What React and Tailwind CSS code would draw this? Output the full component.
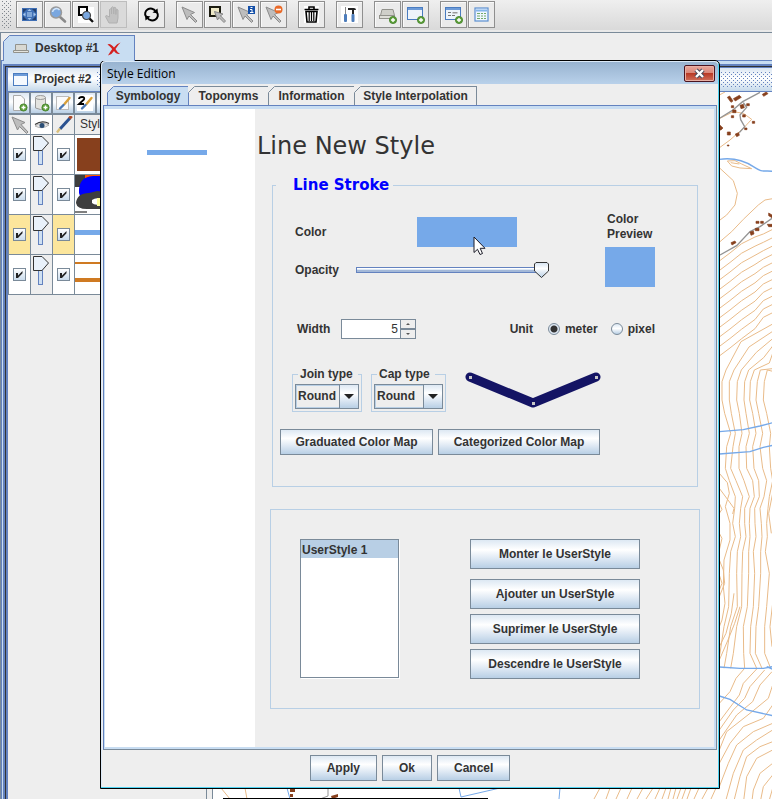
import React, { useId, useState } from "react";

const steel =
  "border border-[#7a8a99] bg-[linear-gradient(180deg,#dde8f3_0%,#ffffff_35%,#dfe9f4_65%,#b8cfe5_100%)]";

/* ---------- toolbar icons ---------- */

const Plus = ({ x = 15, y = 15 }) => (
  <g>
    <circle cx={x} cy={y} r="3.6" fill="#5fa03c" stroke="#3f7f24" strokeWidth="0.8" />
    <path d={`M${x - 2} ${y}h4M${x} ${y - 2}v4`} stroke="#fff" strokeWidth="1.4" />
  </g>
);

const Arrow = () => (
  <path d="M2 2L14.500 7.500L10.500 9.500L17 16L15.500 17.500L9 11L7 14.500Z" fill="#bdbdbd" stroke="#8c8c8c" />
);

const icons = {
  extent: (
    <g>
      <rect x="2" y="3" width="15" height="13" fill="#3f6fb5" />
      <path d="M3 4h4L3 8zM16 4h-4l4 4zM3 15h4l-4-4zM16 15h-4l4-4z" fill="#23406e" />
      <rect x="7" y="7" width="5" height="5" fill="#7fa6d8" />
      <path d="M9.500 4l2 2h-4zM9.500 15l2-2h-4zM3 9.500l2.500-2v4zM16 9.500l-2.500-2v4z" fill="#a9c8ec" />
    </g>
  ),
  zoom: (
    <g>
      <path d="M11.500 11.500L17 16.500" stroke="#8a8a8a" strokeWidth="2.600" strokeLinecap="round" />
      <circle cx="8" cy="7.500" r="5.500" fill="#7aa7df" stroke="#9a9a9a" strokeWidth="1.500" />
      <path d="M4.500 7a4 4 0 0 1 7-2" stroke="#d5e6f8" strokeWidth="1.600" fill="none" />
    </g>
  ),
  zoomBox: (
    <g>
      <rect x="2" y="2" width="16" height="16" fill="#fff" />
      <rect x="3" y="2" width="8" height="8" fill="none" stroke="#000" strokeWidth="2" />
      <path d="M13 13L17 17" stroke="#111" strokeWidth="2.400" />
      <circle cx="10.500" cy="10.500" r="4" fill="#7aa7df" stroke="#444" strokeWidth="1.200" />
    </g>
  ),
  hand: (
    <path
      d="M5 18L1.500 11.500q0-1.500 2-.5L5.500 12V4.500q1-1.500 2 0V9V2.500q1.200-1.500 2.200 0V9V3q1.200-1.500 2.200 0V9.500V5q1.200-1.200 2.100 0V13L13 18z"
      fill="#c2c2c2"
      stroke="#b0b0b0"
    />
  ),
  refresh: (
    <g>
      <path d="M4 11.500a5.500 5 0 0 1 9.500-5.500M15 7.500a5.500 5 0 0 1-9.500 5.500" fill="none" stroke="#000" strokeWidth="2" />
      <path d="M10.500 7.500L16 8.500L15.500 3.500ZM8.500 11.500L3 10.500L3.500 15.500Z" fill="#000" />
    </g>
  ),
  select: <Arrow />,
  selectBox: (
    <g>
      <rect x="2" y="2" width="10" height="9" fill="#eee9c8" stroke="#1c1c10" strokeWidth="2" />
      <path d="M6.500 6.500L15 9l-2.500 1.800L17.500 16l-1.500 1.500-5-5-1.500 2.500z" fill="#bdbdbd" stroke="#888" />
    </g>
  ),
  info: (
    <g>
      <Arrow />
      <rect x="12" y="1" width="7" height="8" fill="#1550a8" />
      <path d="M14.500 2.500h2M14 4.500h2v3M14 7.500h3.500" stroke="#fff" fill="none" />
    </g>
  ),
  clear: (
    <g>
      <Arrow />
      <circle cx="14.500" cy="4.500" r="4" fill="#ea6a28" />
      <path d="M12 4.500h5" stroke="#fff" strokeWidth="1.600" />
    </g>
  ),
  trash: (
    <g>
      <rect x="2" y="1" width="15" height="17" fill="#fff" />
      <path d="M2.500 4.500h14M7 4V2h5v2M4 6.500l1 10.500h9l1-10.500z" fill="none" stroke="#000" strokeWidth="1.600" />
      <path d="M7.200 7v9M9.500 7v9M11.800 7v9" stroke="#000" strokeWidth="1.200" />
    </g>
  ),
  tools: (
    <g>
      <rect x="1" y="1" width="17" height="17" fill="#fff" />
      <path d="M8 3h6q2 0 2 2h-2v4h-2V5H8z" fill="#222" />
      <path d="M5.500 2v8" stroke="#888" />
      <rect x="4" y="9" width="3" height="8" rx="1" fill="#4d7cba" />
      <rect x="11.500" y="9" width="3" height="8" rx="1" fill="#4d7cba" />
    </g>
  ),
  addDesk: (
    <g>
      <path d="M4 4.500h11l1.500 6h-14z" fill="#cfcfc9" stroke="#92928c" />
      <rect x="1.500" y="10.500" width="15" height="3" fill="#deded8" stroke="#92928c" />
      <Plus />
    </g>
  ),
  addWin: (
    <g>
      <rect x="1.500" y="2.500" width="15" height="12" fill="#eef4fb" stroke="#4a7cc0" />
      <rect x="2" y="3" width="14" height="2" fill="#6d9bd8" />
      <Plus />
    </g>
  ),
  addForm: (
    <g>
      <rect x="1.500" y="2.500" width="15" height="12" fill="#eef4fb" stroke="#4a7cc0" />
      <rect x="2" y="3" width="14" height="2" fill="#6d9bd8" />
      <path d="M4 7.500h3M4 10.500h3M8 10.500h3" stroke="#777" />
      <rect x="8.500" y="7" width="5" height="1.500" fill="#999" />
      <Plus />
    </g>
  ),
  table: (
    <g>
      <rect x="3" y="3" width="13" height="13" fill="#eff6ff" stroke="#5b8fd0" strokeWidth="1.200" />
      <path d="M4 5.500h11" stroke="#85b6ea" strokeWidth="2" />
      <path d="M5 8.500h3M9 8.500h2M12 8.500h2M5 11h3M9 11h2M12 11h2M5 13.500h3M9 13.500h2M12 13.500h2" stroke="#72aa6a" />
    </g>
  ),
};

const groups = [
  [["extent", "Full extent"], ["zoom", "Zoom"], ["zoomBox", "Zoom to box"], ["hand", "Pan", true]],
  [["refresh", "Refresh"]],
  [["select", "Select"], ["selectBox", "Select by box"], ["info", "Feature information"], ["clear", "Clear selection"]],
  [["trash", "Delete"]],
  [["tools", "Tools"]],
  [["addDesk", "New desktop"], ["addWin", "New project"]],
  [["addForm", "Add form"], ["table", "Attribute table"]],
];

/* Staggered one-pixel dots: drag handles and title bars. */
function Dots({ color, className }) {
  const id = useId();
  return (
    <svg className={className} aria-hidden="true">
      <pattern id={id} width="4" height="4" patternUnits="userSpaceOnUse">
        <rect x="0" y="0" width="1" height="1" fill={color} />
        <rect x="2" y="2" width="1" height="1" fill={color} />
      </pattern>
      <rect width="100%" height="100%" fill={`url(#${id})`} />
    </svg>
  );
}

function Toolbar() {
  return (
    <header className="flex h-[33px] shrink-0 items-start gap-[11px] border-b border-[#7a8a99] bg-[linear-gradient(180deg,#efefef,#d8d8d8)] pt-px pl-[2px] shadow-[inset_0_-2px_0_#e9e9e9]">
      {groups.map((g, i) => (
        <div key={i} className="flex gap-px">
          {i === 0 && <Dots color="#7f858c" className="mr-[3px] h-[27px] w-[10px]" />}
          {g.map(([name, label, off]) => (
            <button
              key={name}
              aria-label={label}
              disabled={off}
              className="flex size-[27px] items-center justify-center border border-[#8f8f8f] bg-[#ebebeb] shadow-[inset_1px_1px_0_#fafafa] disabled:border-[#bdbdbd] disabled:bg-[#dadada] disabled:shadow-none"
            >
              <svg width="19" height="19" viewBox="0 0 19 19">
                {icons[name]}
              </svg>
            </button>
          ))}
        </div>
      ))}
    </header>
  );
}

/* ---------- shared widgets ---------- */

function Tab({ selected, children, className = "", fill = "#eeeeee" }) {
  const line = selected ? "#6382bf" : "#7a8a99";
  return (
    <button
      role="tab"
      aria-selected={!!selected}
      className={
        "relative border-t border-r " +
        (selected ? "border-[#6382bf] bg-[#c8ddf2] border-l " : "border-[#7a8a99] bg-[#eeeeee] ") +
        className
      }
    >
      <svg className="absolute -top-px -left-px" width="7" height="7" viewBox="0 0 7 7">
        <path d="M0 0H7L0 7Z" fill={fill} />
        <path d="M0.500 6.500L6.500 0.500" stroke={line} />
      </svg>
      {children}
    </button>
  );
}

function Check({ label }) {
  return (
    <span className="relative mx-auto block size-[13px]">
      <input
        type="checkbox"
        defaultChecked
        aria-label={label}
        className="peer block size-[13px] appearance-none border border-[#7a8a99] bg-[linear-gradient(180deg,#ffffff,#c9dbec)]"
      />
      <svg className="pointer-events-none absolute inset-0 hidden peer-checked:block" width="13" height="13">
        <path d="M3 5H5V7.500L9.500 3V5.200L5 10H3Z" fill="#222" />
      </svg>
    </span>
  );
}

function Btn({ children, className = "" }) {
  return <button className={steel + " flex items-center justify-center font-bold whitespace-nowrap " + className}>{children}</button>;
}

function Combo({ id, label, width }) {
  return (
    <fieldset className={"border border-[#b8cfe5] px-[2px] pt-[3px] pb-[2px] " + width}>
      <legend className="ml-[3px] pr-[5px] pl-[2px] leading-[14px] whitespace-nowrap">
        <label htmlFor={id}>{label}</label>
      </legend>
      <div className="relative h-[25px]">
        <select
          id={id}
          className="h-[25px] w-full appearance-none border border-[#7a8a99] bg-[#eeeeee] pl-[2px] font-bold shadow-[inset_1px_1px_0_#b8cfe5,inset_-1px_-1px_0_#b8cfe5]"
        >
          <option>Round</option>
          <option>Bevel</option>
          <option>Miter</option>
        </select>
        <span className={steel + " pointer-events-none absolute top-0 right-0 flex h-[25px] w-[20px] items-center justify-center"}>
          <svg width="10" height="5">
            <path d="M0 0H10L5 5Z" fill="#222" />
          </svg>
        </span>
      </div>
    </fieldset>
  );
}

/* ---------- project panel ---------- */

const thumbs = [
  <rect x="2" y="3" width="40" height="33" fill="#87401d" />,
  <g>
    <rect x="0" y="0" width="42" height="12" fill="#3e3e3e" />
    <rect x="10" y="0" width="20" height="3" fill="#ff5500" />
    <path d="M4 18Q3 2 18 1H42V24H6Z" fill="#0000fe" />
    <path d="M1 28Q2 18 14 18L22 16 42 18V34H12Q2 34 1 28Z" fill="#3e3e3e" />
    <path d="M17 25q4-3 9-1v5q-6 2-9-1z" fill="#fff" />
    <rect x="22" y="23" width="10" height="8" fill="#ffff9c" />
    <rect x="0" y="36" width="12" height="2" fill="#808080" />
  </g>,
  <rect x="0" y="15" width="42" height="5" fill="#76a9e9" />,
  <g fill="#cf7a22">
    <rect x="0" y="7" width="42" height="2" />
    <rect x="0" y="23" width="42" height="4" />
  </g>,
];

function VSlider({ label }) {
  return (
    <span className="relative block h-[39px] bg-[#eeeeee]">
      <svg width="21" height="39" className="block">
        <rect x="7.500" y="11.500" width="4" height="18" fill="#cfe0f2" stroke="#6382bf" />
        <path d="M2.500 1.500H11L17.500 8L11 15.500H2.500Z" fill="#e9f1fa" stroke="#333" />
      </svg>
      <input type="range" aria-label={label} defaultValue="100" className="absolute inset-0 h-[39px] w-[21px] opacity-0 [writing-mode:vertical-lr]" />
    </span>
  );
}

function ProjectPanel() {
  const head = "h-[20px] border-r border-b border-[#7a8a99] p-0 font-normal";
  const cell = "h-[40px] border-r border-b border-[#7a8a99] p-0 ";
  return (
    <section className="w-[198px] shrink-0 bg-[#eeeeee]">
      <div className="flex h-[24px] items-center gap-[6px] border-b border-[#6382bf] bg-[linear-gradient(180deg,#dbe6f2,#ffffff_45%,#c4d8ea)] pl-[5px] font-bold">
        <svg width="15" height="13">
          <rect x="0.500" y="0.500" width="14" height="12" fill="#f5f9fe" stroke="#4a7cc0" />
          <rect x="1" y="1" width="13" height="2" fill="#6d9bd8" />
        </svg>
        <span>Project #2</span>
        <Dots color="#6382bf" className="h-[16px] flex-1" />
      </div>
      <div className="flex h-[23px] border-b border-[#7a8a99]">
        {["New layer", "New database layer", "Edit style", "Edit style 2", "More"].map((l, i) => (
          <button key={l} aria-label={l} className="flex h-[22px] w-[22px] items-center justify-center border border-[#7a8a99] bg-[linear-gradient(180deg,#dde8f3,#ffffff_45%,#b8cfe5)]">
            <svg width="18" height="18">
              {i === 0 && <path d="M3.500 1.500H11L14.500 5V16.500H3.500Z" fill="#fbfbfb" stroke="#aaa" />}
              {i === 1 && (
                <g fill="#e4e4e0" stroke="#999">
                  <path d="M3.500 3.500V14q5 3 10 0V3.500" />
                  <ellipse cx="8.500" cy="3.500" rx="5" ry="2" />
                </g>
              )}
              {i < 2 && <Plus x={13.5} y={13.500} />}
              {i === 2 && <rect x="2.500" y="2.500" width="12" height="13" fill="#fbfbfb" stroke="#bbb" />}
              {i === 3 && <rect x="1" y="1" width="16" height="16" fill="#fff" />}
              {i === 3 && <path d="M3 5Q3 3 6 3T8 5.500L3 10H8" fill="none" stroke="#000" strokeWidth="1.800" />}
              {(i === 2 || i === 3) && (
                <g fill="none" strokeLinecap="round">
                  <path d="M15.500 4L10.500 10" stroke="#d9a03a" strokeWidth="2.400" />
                  <path d="M9.500 11L6 14.500" stroke="#4a78b4" strokeWidth="2.400" />
                </g>
              )}
            </svg>
          </button>
        ))}
      </div>
      <table className="w-full table-fixed border-separate border-spacing-0 border-l border-[#7a8a99]">
        <thead>
          <tr>
            <th className={head + " w-[22px]"} aria-label="Selectable">
              <svg width="21" height="18" className="block">
                <path d="M3 1L16 6.500L12 8.500L19 16L17.500 17.500L10.500 10.500L8.500 14Z" fill="#bdbdbd" stroke="#8c8c8c" />
              </svg>
            </th>
            <th className={head + " w-[22px] bg-white"} aria-label="Visible">
              <svg width="21" height="18" className="block">
                <path d="M4 10Q11 5 18 9Q11 14 4 10Z" fill="#e6e6e6" stroke="#888" strokeWidth="0.600" />
                <path d="M4 8.500Q11 4 18 7.500" fill="none" stroke="#333" strokeWidth="1.200" />
                <circle cx="11" cy="9.500" r="2.500" fill="#2c4f76" />
              </svg>
            </th>
            <th className={head + " w-[22px]"} aria-label="Editable">
              <svg width="21" height="18" className="block">
                <path d="M17 2L7 13" stroke="#2b5290" strokeWidth="3" />
                <path d="M18.500 0L16.500 2.500" stroke="#b04a28" strokeWidth="3.200" />
                <path d="M7 12.500L4 16.500" stroke="#d9bf7a" strokeWidth="2.400" />
              </svg>
            </th>
            <th className={head + " pl-[5px] text-left"}>Style</th>
          </tr>
        </thead>
        <tbody>
          {thumbs.map((t, i) => (
            <tr key={i}>
              <td className={cell + (i === 2 ? "bg-[#fce69c]" : "bg-white")}>
                <Check label={"Selectable layer " + (i + 1)} />
              </td>
              <td className={cell + "bg-[#eeeeee]"}>
                <VSlider label={"Visibility of layer " + (i + 1)} />
              </td>
              <td className={cell + (i === 2 ? "bg-[#fce69c]" : "bg-white")}>
                <Check label={"Editable layer " + (i + 1)} />
              </td>
              <td className={cell + "bg-white"}>
                <svg width="42" height="39" className="block">
                  {t}
                </svg>
              </td>
            </tr>
          ))}
        </tbody>
      </table>
    </section>
  );
}

/* ---------- map ---------- */

/* Contour lines, in thirds of a pixel. */
const slopes = Array.from({ length: 11 }, (_, i) => {
  const l = 603 + i * 28.5;
  const r = 508 + i * 25;
  return `M58 ${l}L90 ${l - 24}L125 ${l - 52}L165 ${l - 72 - i}L${190} ${r + 14}L218 ${r}`;
});

const rows = [
  [930, [78, 102, 124, 146, 163, 181, 202]],
  [965, [66, 88, 112, 134, 151, 172, 193]],
  [1020, [66, 88, 110, 132, 149, 168, 190]],
  [1060, [74, 94, 118, 138, 158, 176, 200]],
  [1120, [92, 106, 126, 148, 168, 188, 212]],
  [1160, [80, 99, 117, 138, 158, 180, 208]],
  [1225, [76, 92, 117, 140, 162, 188, 212]],
  [1262, [88, 108, 132, 158, 176, 200, 218]],
  [1310, [106, 128, 148, 163, 178, 192, 208]],
  [1345, [104, 122, 134, 150, 164, 180, 204]],
  [1390, [98, 118, 134, 148, 165, 184, 200]],
  [1430, [106, 122, 138, 150, 168, 186, 202]],
  [1475, [92, 112, 128, 146, 160, 182, 196]],
  [1540, [88, 110, 126, 146, 164, 182, 208]],
  [1640, [86, 112, 125, 142, 160, 176, 200]],
  [1700, [72, 92, 110, 130, 152, 168, 194]],
  [1780, [60, 80, 100, 131, 150, 166, 194]],
  [1825, [50, 72, 92, 134, 170, 186, 212]],
];
const streams = rows[0][1].map((x0, k) => {
  const top = `M218 ${792 + k * 22}L${x0 + 45} ${845 + k * 16}`;
  return top + rows.map(([y, xs]) => `L${xs[k]} ${y}`).join("");
});

const wiggles = [
  "M58 1240L82 1268L88 1300L76 1340L90 1390L90 1440L72 1500L70 1580L75 1630L66 1680L58 1700",
  "M58 1285L84 1320L102 1345L98 1362",
  "M58 1330L66 1348L58 1360",
  "M58 1420L66 1435L58 1470M58 1500L70 1530L74 1570L58 1610M58 1545L66 1570L58 1590",
  "M58 1760L78 1720L94 1660L102 1600",
  "M58 1800L84 1740L104 1690L120 1640",
  "M218 1630L210 1700L216 1760M218 1300L206 1360L214 1420",
  "M134 1825L108 1855L90 1895L58 1930",
  "M172 1825L130 1870L118 1905L58 1985",
  "M194 1830L150 1880L134 1915L100 1950L58 2010",
  "M216 1835L180 1875L158 1925L110 1965L58 2040",
  "M218 1875L205 1915L150 1960L80 2015L58 2070",
  "M218 1935L190 1975L130 2000L90 2050L58 2110",
  "M218 1990L160 2015L110 2055L85 2110L58 2180",
  "M218 2010L170 2040L130 2070L100 2140L75 2230",
  "M218 2045L180 2060L140 2090L120 2150L100 2230",
  "M218 2070L170 2095L140 2150L130 2230",
  "M218 2110L180 2140L160 2190L155 2230",
  "M218 2145L190 2180L180 2230M218 2185L205 2230",
];

const houses = [
  "M82 112l7-4 10 15-6 4z", "M100 116l18-10 6 6-18 11z", "M187 103l12-7 5 5-13 8z", "M120 136l10-3 3 10-10 3z",
  "M94 137h7v6h-7zM98 150h10v8h-10zM94 167h7v6h-7zM140 131h8v6h-8zM128 164h8v7h-8zM157 184h7v6h-7zM60 196l9 8-6 6h-5z",
  "M82 216h9v9h-9zM106 222l10-4 2 8-8 4zM134 204h7v5h-7zM82 255h5v3h-5z",
  "M93 548l12-5 3 5-12 7zM150 516l10-3 2 9-9 4zM168 484h9v6h-9zM182 484h8v6h-8zM166 505h11v7h-11zM206 459l10 6v8l-10-6zM202 493h14v7h-10z",
];

function MapView() {
  return (
    <section className="flex min-w-0 flex-1 flex-col">
      <div className="h-[24px] border-b border-[#6382bf] bg-[linear-gradient(180deg,#dbe6f2,#ffffff_45%,#c4d8ea)] py-[4px]">
        <Dots color="#6382bf" className="h-[15px] w-full" />
      </div>
      <div className="relative flex-1 overflow-hidden bg-white">
        <svg className="absolute inset-0 h-full w-full" role="img" aria-label="Map">
          <g transform="translate(-213 -92)" fill="none">
            <g transform="translate(700 60) scale(0.33333)" strokeWidth="3" stroke="#e9bb89">
              <path d="M60 262L90 240L130 205L155 178L130 160L100 155L60 175M60 104L75 96" />
              <path d="M82 303L105 302L125 312L155 326L120 324L95 318ZM92 308L118 312" />
              <path d="M60 325L100 362L112 400L105 435L80 465L60 480" />
              <path d="M60 545L95 515L130 478L175 435L195 420L218 416" />
              {slopes.map((d) => <path key={d} d={d} />)}
              {streams.map((d) => <path key={d} d={d} />)}
              {wiggles.map((d) => <path key={d} d={d} />)}
              <g stroke="#949494" strokeWidth="4">
                <path d="M60 174L96 152L128 125L180 97M130 128L140 142L120 165L122 179L134 200L118 218" />
                <path d="M60 585L110 557L150 515L180 500L216 475" />
              </g>
              <g stroke="#76a9e9" strokeWidth="4">
                <path d="M58 298C100 292 130 300 160 320S190 330 218 334" />
                <path d="M58 1115L130 1109L180 1098L218 1088M58 1182L150 1175L190 1162L218 1156" />
                <path d="M58 1821L120 1825L190 1825L218 1820M200 1820L218 1828" />
                <path d="M58 1908L90 1918L140 1950L218 1967" />
              </g>
              <g fill="#87401d" stroke="#87401d" strokeWidth="2">
                {houses.map((d) => <path key={d} d={d} />)}
              </g>
            </g>
            <g stroke="#e9bb89">
              <path d="M221 788L230 799M245 788L247 799M600 788L594 799M610 788L606 799M621 788L616 799M632 788L627 799M643 788L637 799M653 788L646 799" />
              <path d="M660 788L655 799M666 788L662 799M671 788L668 799M676 788L673 799M681 788L677 799M686 788L682 799M691 788L687 799M699 788L694 799M708 788L702 799M716 788L711 799" />
            </g>
            <path d="M287 788L290 799M459 788L461 797L500 788M560 788L559 799" stroke="#76a9e9" />
            <path d="M328 788V796L320 799" stroke="#949494" />
            <path d="M290 789h5v3h-5zM290 794h3v3h-3zM331 796l7-2v3l-6 2z" fill="#87401d" />
            <path d="M223 798.500H488" stroke="#000" />
          </g>
        </svg>
      </div>
    </section>
  );
}

/* ---------- style dialog ---------- */

function StyleDialog() {
  const [width, setWidth] = useState(5);
  return (
    <div
      role="dialog"
      aria-label="Style Edition"
      className="absolute top-[60px] left-[100px] w-[620px] rounded-t-[5px] border border-black bg-[#eeeeee] shadow-[inset_-1px_-1px_0_#4fd3f2,inset_1px_1px_0_#dbe9f7]"
    >
      <div className="m-px mb-0 flex h-[22px] items-center justify-between rounded-t-[4px] bg-[linear-gradient(180deg,#98b3d0,#b9d1ea)] pr-[3px] pl-[5px]">
        <span className="font-['Open_Sans','Noto_Sans',sans-serif] text-[12px] text-black">Style Edition</span>
        <button
          aria-label="Close"
          className="flex h-[17px] w-[31px] items-center justify-center rounded-[2px] border border-[#4a1420] bg-[linear-gradient(180deg,#e8a79c_0%,#d98577_48%,#b93a26_50%,#d0705c_100%)] shadow-[inset_0_0_0_1px_#e8b0a5]"
        >
          <svg width="13" height="11" viewBox="0 0 13 11">
            <path d="M3 2L10 9M10 2L3 9" stroke="#4a4a5a" strokeWidth="4.400" />
            <path d="M3 2L10 9M10 2L3 9" stroke="#fff" strokeWidth="2.400" />
          </svg>
        </button>
      </div>

      <div role="tablist" className="flex h-[21px] items-stretch pt-[2px] pl-[6px] font-bold">
        <Tab selected className="w-[82px]">Symbology</Tab>
        <Tab className="w-[80px]">Toponyms</Tab>
        <Tab className="w-[86px]">Information</Tab>
        <Tab className="w-[122px]">Style Interpolation</Tab>
      </div>

      <div className="mx-[2px] border border-t-[#6382bf] border-r-[#7a8a99] border-b-[#7a8a99] border-l-[#6382bf]">
        <div className="flex border-t-[3px] border-r-2 border-b-2 border-l border-[#c8ddf2]">
          <div className="w-[150px] shrink-0 bg-white pt-[41px] pl-[42px]">
            <div className="h-[5px] w-[60px] bg-[#76a9e9]" />
          </div>
          <div className="min-w-0 flex-1 pb-[38px]">
            <h1 className="pt-[21px] pl-[2px] font-['DejaVu_Sans',Verdana,sans-serif] text-[24px] leading-[32px]">Line New Style</h1>

            <fieldset className="mt-[13px] mr-[16px] ml-[17px] border border-[#b8cfe5] pt-[17px] pb-[31px] font-bold">
              <legend className="ml-[3px] pr-[4px] pl-[17px] font-['DejaVu_Sans',Verdana,sans-serif] text-[15px] leading-[20px] text-[#0000ff]">
                Line Stroke
              </legend>

              <div className="flex justify-between pr-[42px] pl-[22px]">
                <div className="pt-[5px]">
                  <div className="flex h-[30px] items-center">
                    <label htmlFor="color" className="w-[122px]">Color</label>
                    <button id="color" aria-label="Color" className="relative h-[30px] w-[100px] bg-[#76a9e9]">
                      <svg className="absolute top-[19px] left-[56px]" width="13" height="20" viewBox="0 0 13 20">
                        <path d="M1 1V16.500L4.500 13.300L7 18.500L9.500 17.500L7.200 12.300H12Z" fill="#fff" stroke="#1c1c28" />
                      </svg>
                    </button>
                  </div>
                  <div className="mt-[15px] flex h-[16px] items-center">
                    <label htmlFor="opacity" className="w-[61px]">Opacity</label>
                    <div className="relative h-[16px] w-[194px]">
                      <svg width="194" height="17" className="block">
                        <defs>
                          <linearGradient id="thumb" x1="0" y1="0" x2="0" y2="1">
                            <stop offset="0" stopColor="#d5e3f1" />
                            <stop offset="0.400" stopColor="#ffffff" />
                            <stop offset="1" stopColor="#b8cfe5" />
                          </linearGradient>
                        </defs>
                        <rect x="0.500" y="5.500" width="184" height="5" fill="#a3b8d8" stroke="#6382bf" />
                        <path d="M1 6.500H184" stroke="#fff" />
                        <path d="M1 7.500H184" stroke="#dce8f5" />
                        <path d="M180 0.500H191L192.500 2V9L185.500 15.500L178.500 9V2Z" fill="url(#thumb)" stroke="#333" />
                      </svg>
                      <input id="opacity" type="range" defaultValue="100" className="absolute inset-0 w-full opacity-0" />
                    </div>
                  </div>
                </div>
                <div>
                  <div className="w-[50px] pl-[2px] leading-[15px]">Color Preview</div>
                  <div className="mt-[5px] h-[40px] w-[50px] bg-[#76a9e9]" />
                </div>
              </div>

              <div className="mt-[32px] flex h-[20px] items-center justify-between pr-[42px] pl-[24px]">
                <div className="flex items-center">
                  <label htmlFor="width" className="w-[44px]">Width</label>
                  <input
                    id="width"
                    value={width}
                    onChange={(e) => setWidth(e.target.value)}
                    className="h-[20px] w-[59px] border border-r-0 border-[#7a8a99] bg-white pr-[2px] text-right font-normal"
                  />
                  <div className="flex w-[16px] flex-col">
                    {[1, -1].map((s) => (
                      <button
                        key={s}
                        aria-label={s > 0 ? "Increase width" : "Decrease width"}
                        onClick={() => setWidth(Number(width) + s)}
                        className="flex h-[10px] items-center justify-center border border-[#7a8a99]"
                      >
                        <svg width="4" height="2">
                          <path d={s > 0 ? "M0 2L2 0L4 2Z" : "M0 0L2 2L4 0Z"} fill="#555" />
                        </svg>
                      </button>
                    ))}
                  </div>
                </div>
                <div className="flex items-center" role="radiogroup" aria-label="Unit">
                  <span className="mr-[15px]">Unit</span>
                  {["meter", "pixel"].map((u) => (
                    <label key={u} className="mr-[13px] flex items-center gap-[5px] last:mr-0">
                      <input
                        type="radio"
                        name="unit"
                        defaultChecked={u === "meter"}
                        className="size-[12px] appearance-none rounded-full border border-[#7a8a99] bg-[linear-gradient(180deg,#dde8f3,#ffffff_45%,#b8cfe5)] checked:bg-[radial-gradient(circle,#333333_3px,#dfe9f4_4px)]"
                      />
                      {u}
                    </label>
                  ))}
                </div>
              </div>

              <div className="mt-[28px] flex gap-[9px] pl-[19px]">
                <Combo id="join" label="Join type" width="w-[70px]" />
                <Combo id="cap" label="Cap type" width="w-[75px]" />
                <svg width="160" height="45" className="ml-[10px]" role="img" aria-label="Line preview">
                  <path d="M5 10L68 36L131 10" fill="none" stroke="#141464" strokeWidth="9" strokeLinecap="round" strokeLinejoin="round" />
                  <path d="M4 9h3v3h-3zM67 35h3v3h-3zM130 9h3v3h-3z" fill="#c8c8c8" />
                </svg>
              </div>

              <div className="mt-[17px] flex gap-[5px] pl-[7px]">
                <Btn className="h-[26px] w-[153px]">Graduated Color Map</Btn>
                <Btn className="h-[26px] w-[162px]">Categorized Color Map</Btn>
              </div>
            </fieldset>

            <section className="mt-[22px] mr-[14px] ml-[15px] flex items-start gap-[71px] border border-[#b8cfe5] px-[29px] py-[29px] font-bold">
              <div role="listbox" aria-label="User styles" className="h-[139px] w-[99px] border border-[#7a8a99] bg-white shadow-[1px_1px_0_#ffffff]">
                <div role="option" aria-selected="true" className="h-[18px] bg-[#b8cfe5] pl-px leading-[20px]">
                  UserStyle 1
                </div>
              </div>
              <div className="flex w-[170px] flex-col gap-[5px]">
                <Btn className="mb-[5px] h-[30px]">Monter le UserStyle</Btn>
                <Btn className="h-[30px]">Ajouter un UserStyle</Btn>
                <Btn className="h-[30px]">Suprimer le UserStyle</Btn>
                <Btn className="h-[30px]">Descendre le UserStyle</Btn>
              </div>
            </section>
          </div>
        </div>
      </div>

      <div className="flex justify-center gap-[5px] pt-[5px] pb-[7px]">
        <Btn className="h-[26px] px-[16px]">Apply</Btn>
        <Btn className="h-[26px] px-[16px]">Ok</Btn>
        <Btn className="h-[26px] px-[16px]">Cancel</Btn>
      </div>
    </div>
  );
}

export default function App() {
  return (
    <main className="relative flex min-h-screen flex-col overflow-hidden bg-[#eeeeee] font-['Liberation_Sans',Arial,sans-serif] text-[12px] leading-[15px] text-[#333333]">
      <Toolbar />
      <div className="flex flex-1 flex-col border-l border-[#7a8a99]">
        <div role="tablist" className="flex pt-[2px] pl-[2px]">
          <Tab selected className="z-10 -mb-px flex h-[26px] w-[132px] items-center pl-[9px] font-bold">
            <svg width="16" height="11">
              <path d="M2.500 1.500h11v6h-11z" fill="#d8d8d2" stroke="#92928c" />
              <path d="M0.500 7.500h15v2h-15z" fill="#e4e4de" stroke="#92928c" />
            </svg>
            <span className="ml-[6px]">Desktop #1</span>
            <svg width="14" height="14" className="ml-[8px]">
              <path d="M0.500 2.500Q3 0.500 7 5.500Q10 1.500 13.500 0.500Q11 3 8.500 7Q10 10 13 12Q9 12.500 7 9Q5 12.500 1 13.500Q3 10 5.200 7Q3 4 0.500 2.500Z" fill="#d42020" />
            </svg>
          </Tab>
        </div>
        <div className="flex flex-1 flex-col border-t border-l border-[#6382bf] bg-[#c8ddf2] pt-[3px] pl-px">
          <div className="flex flex-1 flex-col border-t-2 border-l-2 border-[#6382bf]">
            <div className="flex flex-1 border-t border-l border-[#333333]">
              <div className="flex flex-1 border-t border-l-2 border-[#6382bf]">
                <ProjectPanel />
                <div className="w-[7px] shrink-0 border-x border-[#7a8a99] bg-[#eeeeee]" />
                <MapView />
              </div>
            </div>
          </div>
        </div>
      </div>
      <StyleDialog />
    </main>
  );
}
